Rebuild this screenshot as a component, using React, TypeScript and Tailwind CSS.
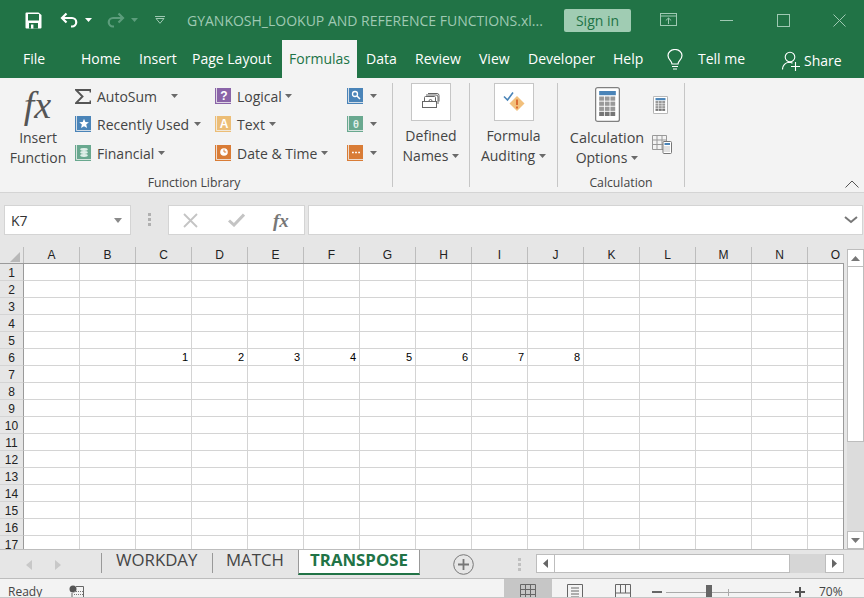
import React from "react";

const COLS = ["A","B","C","D","E","F","G","H","I","J","K","L","M","N","O"];
const ROWS = Array.from({ length: 17 }, (_, i) => i + 1);

function Caret({ className = "" }: { className?: string }) {
  return (
    <svg width="7" height="4" viewBox="0 0 7 4" className={className}>
      <path d="M0 0h7L3.5 4z" fill="#6a6a6a" />
    </svg>
  );
}

function Book({ color, children }: { color: string; children?: React.ReactNode }) {
  return (
    <svg width="16" height="16" viewBox="0 0 16 16" className="shrink-0">
      <rect x="0" y="0" width="1.2" height="16" fill={color} />
      <rect x="0" y="14.8" width="16" height="1.2" fill={color} />
      <rect x="2" y="0" width="14" height="14" fill={color} />
      {children}
    </svg>
  );
}

function RibbonRow({ icon, label, className = "", caretClass = "ml-1" }: { icon: React.ReactNode; label: string; className?: string; caretClass?: string }) {
  return (
    <div className={`flex items-center ${className}`}>
      <div className="flex w-[22px] shrink-0 items-center">{icon}</div>
      <span className="whitespace-nowrap">{label}</span>
      <Caret className={caretClass} />
    </div>
  );
}

function Sep({ className = "" }: { className?: string }) {
  return <div className={`h-[104px] w-px shrink-0 bg-[#c6c6c6] ${className}`} />;
}

function CalcIcon({ w, h }: { w: number; h: number }) {
  const cells = [];
  for (let r = 0; r < 4; r++) for (let c = 0; c < 3; c++) cells.push(<rect key={`${r}${c}`} x={4 + c * 5.4} y={9.5 + r * 5.1} width="4.6" height="4.2" fill={r === 3 ? "#777" : "#999"} />);
  return (
    <svg width={w} height={h} viewBox="0 0 24 35" preserveAspectRatio="none">
      <rect x="0.6" y="0.6" width="22.8" height="33.8" rx="2" fill="#fff" stroke="#808080" strokeWidth="1.2" />
      <rect x="4" y="4" width="16" height="4.2" fill="#4a84b8" />
      {cells}
    </svg>
  );
}

export default function App() {
  return (
    <div className="flex h-[598px] w-[864px] flex-col overflow-hidden bg-[#e6e6e6] font-['Open_Sans','Noto_Sans',sans-serif] text-[14px] text-[#444]">
      {/* Title bar */}
      <div className="flex h-[40px] shrink-0 items-center bg-[#217346] text-[14px]">
        <svg width="17" height="17" viewBox="0 0 17 17" className="ml-[25px]">
          <path d="M0.5 1.5a1 1 0 0 1 1-1H13.5L16.5 3v12.5a1 1 0 0 1-1 1H1.5a1 1 0 0 1-1-1z" fill="#fff" />
          <rect x="3" y="2" width="11" height="6.5" fill="#217346" />
          <rect x="4" y="11" width="9" height="5.5" fill="#217346" />
          <rect x="6" y="12.5" width="2.4" height="4" fill="#fff" />
        </svg>
        <svg width="19" height="16" viewBox="0 0 19 16" className="ml-[18px]" fill="none">
          <path d="M6.5 1.5 2 6l4.5 4.5" stroke="#fff" strokeWidth="2.2" />
          <path d="M2.5 6H12a4.2 4.2 0 0 1 0 8.5h-1" stroke="#fff" strokeWidth="2.2" />
        </svg>
        <svg width="7" height="4" viewBox="0 0 7 4" className="ml-[6px]"><path d="M0 0h7L3.5 4z" fill="#fff" /></svg>
        <svg width="19" height="16" viewBox="0 0 19 16" className="ml-[14px]" fill="none">
          <path d="M12.5 1.5 17 6l-4.5 4.5" stroke="#5c9d7c" strokeWidth="2.2" />
          <path d="M16.5 6H7a4.2 4.2 0 0 0 0 8.5h1" stroke="#5c9d7c" strokeWidth="2.2" />
        </svg>
        <svg width="7" height="4" viewBox="0 0 7 4" className="ml-[6px]"><path d="M0 0h7L3.5 4z" fill="#5c9d7c" /></svg>
        <svg width="10" height="8" viewBox="0 0 10 8" className="ml-[17px]" fill="none">
          <path d="M0 0.5h10" stroke="#9fc9b3" />
          <path d="M1 2.5h8L5 7.3z" stroke="#9fc9b3" />
        </svg>
        <span className="ml-[22px] w-[377px] whitespace-nowrap text-[#9fc9b3]">GYANKOSH_LOOKUP AND REFERENCE FUNCTIONS.xl...</span>
        <div className="flex h-[23px] w-[67px] items-center justify-center rounded-[2px] bg-[#a0ccb3] text-[#217346]">Sign in</div>
        <svg width="17" height="14" viewBox="0 0 17 14" className="ml-[29px]" fill="none" stroke="#9fc9b3">
          <rect x="0.5" y="0.5" width="16" height="12" />
          <path d="M0.5 3h16M8.5 11V5M5.8 7.5 8.5 5l2.7 2.5" />
        </svg>
        <div className="ml-[43px] h-px w-[13px] bg-[#9fc9b3]" />
        <div className="ml-[44px] h-[13px] w-[13px] border border-[#9fc9b3]" />
        <svg width="13" height="13" viewBox="0 0 13 13" className="ml-[43px]" stroke="#9fc9b3"><path d="M0.5 0.5l12 12M12.5 0.5l-12 12" /></svg>
      </div>

      {/* Tabs */}
      <div className="flex h-[38px] shrink-0 items-stretch bg-[#217346] text-[#fff]">
        <span className="ml-[23px] w-[58px] pt-[8px]">File</span>
        <span className="w-[58px] pt-[8px]">Home</span>
        <span className="w-[53px] pt-[8px]">Insert</span>
        <span className="w-[90px] whitespace-nowrap pt-[8px]">Page Layout</span>
        <span className="w-[75px] bg-[#f3f3f3] pt-[8px] text-center text-[#217346]">Formulas</span>
        <span className="ml-[9px] w-[49px] pt-[8px]">Data</span>
        <span className="w-[64px] pt-[8px]">Review</span>
        <span className="w-[49px] pt-[8px]">View</span>
        <span className="w-[85px] pt-[8px]">Developer</span>
        <span className="w-[54px] pt-[8px]">Help</span>
        <svg width="16" height="21" viewBox="0 0 16 21" className="mt-[9px]" fill="none" stroke="#fff" strokeWidth="1.2">
          <path d="M5 15c0-3-4-4.500-4-8.500a7 6 0 0 1 14 0C15 10.500 11 12 11 15z" />
          <path d="M5 17.500h6M6 20h4" />
        </svg>
        <span className="ml-[15px] w-[84px] whitespace-nowrap pt-[8px]">Tell me</span>
        <svg width="19" height="20" viewBox="0 0 19 20" className="mt-[11px]" fill="none" stroke="#fff" strokeWidth="1.1">
          <circle cx="8" cy="6" r="4.800" />
          <path d="M0.500 18.500c0-4 3-7 6.500-7.200 1.500 0 2.500.3 3.500 1" />
          <path d="M9 15.500h9M13.500 11v9" />
        </svg>
        <span className="ml-[3px] pt-[10px]">Share</span>
      </div>

      {/* Ribbon */}
      <div className="relative flex h-[115px] shrink-0 border-b border-[#d4d4d4] bg-[#f3f3f3] pt-[5px] text-[#444]">
        <div className="flex w-[392px] shrink-0 flex-col">
          <div className="flex h-[92px]">
            <div className="flex w-[75px] shrink-0 flex-col items-center pl-[1px] leading-[20px]">
              <span className="h-[44px] pr-[1px] font-['Liberation_Serif',serif] text-[38px] leading-[44px] italic text-[#555]">fx</span>
              <span className="mt-[1px]">Insert</span>
              <span>Function</span>
            </div>
            <div className="w-[140px] shrink-0">
              <RibbonRow
                className="h-[26px]"
                caretClass="ml-[14px]"
                label="AutoSum"
                icon={<svg width="16" height="15" viewBox="0 0 16 15" fill="none"><path d="M15.500 3.500V1H1l6.500 6.500L1 14h14.500v-2.500" stroke="#555" strokeWidth="1.900" /></svg>}
              />
              <RibbonRow className="h-[30px]" caretClass="ml-[5px]" label="Recently Used" icon={<Book color="#4a84b8"><path d="M9 2.800l1.400 3.300 3.500.2-2.700 2.300.9 3.400L9 10.200 6 12l.9-3.400L4.200 6.300l3.500-.2z" fill="#fff" /></Book>} />
              <RibbonRow className="h-[28px]" label="Financial" icon={<Book color="#69a88f"><ellipse cx="9" cy="4.500" rx="3.800" ry="1.400" fill="#dfeee8" /><ellipse cx="9" cy="7.500" rx="3.800" ry="1.400" fill="#dfeee8" /><ellipse cx="9" cy="10.500" rx="3.800" ry="1.400" fill="#dfeee8" /></Book>} />
            </div>
            <div className="w-[132px] shrink-0">
              <RibbonRow className="h-[26px]" caretClass="ml-[3px]" label="Logical" icon={<Book color="#8a64a8"><text x="9" y="12" textAnchor="middle" fontSize="12" fontWeight="700" fill="#fff" fontFamily="Liberation Sans">?</text></Book>} />
              <RibbonRow className="h-[30px]" label="Text" icon={<Book color="#ecbd76"><text x="9" y="12" textAnchor="middle" fontSize="12" fontWeight="700" fill="#fff" fontFamily="Liberation Sans">A</text></Book>} />
              <RibbonRow className="h-[28px]" caretClass="ml-[4px]" label="Date & Time" icon={<Book color="#d97c36"><circle cx="9" cy="7" r="3.800" fill="#fff" /><path d="M9 4.500V7h2.200" stroke="#d97c36" fill="none" /></Book>} />
            </div>
            <div className="shrink-0">
              <div className="flex h-[26px] items-center"><Book color="#4a84b8"><circle cx="8" cy="6" r="2.500" fill="none" stroke="#fff" strokeWidth="1.300" /><path d="M10 8l3 3" stroke="#fff" strokeWidth="1.500" /></Book><Caret className="ml-[7px]" /></div>
              <div className="flex h-[30px] items-center"><Book color="#69a88f"><text x="9" y="12" textAnchor="middle" fontSize="11" fontWeight="700" fill="#dfeee8" fontFamily="Liberation Sans">θ</text></Book><Caret className="ml-[7px]" /></div>
              <div className="flex h-[28px] items-center"><Book color="#d97c36"><path d="M5 7.500h1.800M8.100 7.500h1.800M11.200 7.500H13" stroke="#fff" strokeWidth="1.500" /></Book><Caret className="ml-[7px]" /></div>
            </div>
          </div>
          <div className="pr-[4px] text-center text-[12.25px] leading-[16px]">Function Library</div>
        </div>
        <Sep />
        <div className="flex w-[76px] shrink-0 flex-col items-center leading-[20px]">
          <div className="flex h-[38px] w-[40px] items-center justify-center border border-[#c6c6c6] bg-[#fff]">
            <svg width="20" height="20" viewBox="0 0 20 20" fill="none" stroke="#666">
              <rect x="1.500" y="9.500" width="14" height="6" />
              <path d="M3.500 9.500V5.500a1 1 0 0 1 1-1h9a1 1 0 0 1 1 1V9.500M5 3h10a2 2 0 0 1 2 2v7M7 1.500h9a2 2 0 0 1 2 2v6" />
              <path d="M8 9a1.500 1.500 0 0 1 3 0" />
            </svg>
          </div>
          <span className="mt-[5px]">Defined</span>
          <span className="flex items-center">Names<Caret className="ml-[4px]" /></span>
        </div>
        <Sep />
        <div className="flex w-[87px] shrink-0 flex-col items-center leading-[20px]">
          <div className="flex h-[38px] w-[40px] items-center justify-center border border-[#c6c6c6] bg-[#fff]">
            <svg width="22" height="22" viewBox="0 0 22 22">
              <path d="M14 5l7.500 7.500L14 20l-7.500-7.500z" fill="#f2c07c" />
              <path d="M14 8.500v5.500M14 15.500v2" stroke="#d8642c" strokeWidth="1.800" />
              <path d="M1 5.500l3.500 3.500L10 1.500" stroke="#4a84b8" strokeWidth="1.600" fill="none" />
            </svg>
          </div>
          <span className="mt-[5px]">Formula</span>
          <span className="flex items-center">Auditing<Caret className="ml-[4px]" /></span>
        </div>
        <Sep />
        <div className="w-[126px] shrink-0">
          <div className="flex h-[92px]">
            <div className="flex w-[92px] shrink-0 flex-col items-center pl-[6px] leading-[20px]">
              <div className="mt-[4px] flex h-[35px]"><CalcIcon w={25} h={35} /></div>
              <span className="mt-[6px] whitespace-nowrap text-[14.4px]">Calculation</span>
              <span className="flex items-center">Options<Caret className="ml-[4px]" /></span>
            </div>
            <div className="flex flex-col pl-[2px]">
              <div className="mt-[13px] flex pl-[1px]"><CalcIcon w={15} h={18} /></div>
              <svg width="20" height="19" viewBox="0 0 20 19" className="mt-[21px]" fill="none">
                <path d="M0.500 0.500h14v14h-14zM0.500 5h14M0.500 9.500h14M5 0.500v14M10 0.500v14" stroke="#999" />
                <rect x="11" y="6.500" width="8.500" height="12" rx="1" fill="#fff" stroke="#777" />
                <rect x="12.500" y="8" width="5.500" height="2" fill="#4a84b8" />
                <path d="M12.500 12h5.500M12.500 14h5.500M12.500 16h5.500" stroke="#888" strokeDasharray="1 1" />
              </svg>
            </div>
          </div>
          <div className="text-center text-[12.25px] leading-[16px]">Calculation</div>
        </div>
        <Sep />
        <svg width="14" height="8" viewBox="0 0 14 8" className="absolute right-[5px] bottom-[4px]" fill="none" stroke="#555"><path d="M0.500 7.500 7 1l6.500 6.500" /></svg>
      </div>

      {/* Formula bar */}
      <div className="flex h-[54px] shrink-0 items-start pt-[12px]">
        <div className="ml-[4px] flex h-[30px] w-[127px] shrink-0 items-center justify-between border border-[#d4d4d4] bg-[#fff] pl-[6px] pr-[8px] text-[#333]">
          <span>K7</span>
          <svg width="8" height="5" viewBox="0 0 8 5"><path d="M0 0h8L4 5z" fill="#8a8a8a" /></svg>
        </div>
        <div className="ml-[17px] mt-[8px] flex w-[3px] shrink-0 flex-col gap-[2px]">
          <div className="h-[3px] bg-[#b0b0b0]" />
          <div className="h-[3px] bg-[#b0b0b0]" />
          <div className="h-[3px] bg-[#b0b0b0]" />
        </div>
        <div className="ml-[17px] flex h-[30px] w-[137px] shrink-0 items-center border border-[#d4d4d4] bg-[#fff]">
          <svg width="15" height="15" viewBox="0 0 15 15" className="ml-[14px]" stroke="#c4c4c4" strokeWidth="1.800"><path d="M1 1l13 13M14 1 1 14" /></svg>
          <svg width="17" height="14" viewBox="0 0 17 14" className="ml-[30px]" fill="none" stroke="#c4c4c4" strokeWidth="3"><path d="M1 7.500l5 4.500L16 1.500" /></svg>
          <span className="ml-[28px] font-['Liberation_Serif',serif] text-[19px] font-bold italic leading-none text-[#777]">fx</span>
        </div>
        <div className="ml-[3px] flex h-[30px] w-[555px] shrink-0 items-center justify-end border border-[#d4d4d4] bg-[#fff] pr-[4px]">
          <svg width="14" height="8" viewBox="0 0 14 8" fill="none" stroke="#777" strokeWidth="2"><path d="M1 1l6 5 6-5" /></svg>
        </div>
      </div>

      {/* Sheet area */}
      <div className="flex h-[302px] shrink-0 overflow-hidden">
        <div className="flex w-[844px] shrink-0 flex-col overflow-hidden">
          <div className="flex h-[16px] shrink-0 bg-[#e6e6e6]">
            <div className="flex w-[24px] shrink-0 items-end justify-end border-r border-[#bdbdbd] pb-[1px] pr-[3px]">
              <svg width="10" height="10" viewBox="0 0 10 10"><path d="M10 0v10H0z" fill="#b8b8b8" /></svg>
            </div>
            {COLS.map((c) => (
              <div key={c} className="flex w-[56px] shrink-0 items-center justify-center border-r border-[#bdbdbd] font-['Liberation_Sans',sans-serif] text-[12px] text-[#222]">{c}</div>
            ))}
          </div>
          <div className="h-px shrink-0 bg-[#9a9a9a]" />
          <div className="min-h-0 flex-1 overflow-hidden border-r border-[#9a9a9a] bg-[#fff]">
            {ROWS.map((r) => (
              <div key={r} className="flex h-[17px]">
                <div className="flex w-[24px] shrink-0 items-center justify-center border-r border-b border-r-[#9a9a9a] border-b-[#d4d4d4] bg-[#e6e6e6] pt-[1px] font-['Liberation_Sans',sans-serif] text-[12px] text-[#222]">{r}</div>
                {COLS.map((c, i) => (
                  <div key={c} className="flex w-[56px] shrink-0 items-center justify-end border-r border-b border-[#d4d4d4] pr-[3px] pt-[1px] font-['Liberation_Sans',sans-serif] text-[11px] text-[#000]">
                    {r === 6 && i >= 2 && i <= 9 ? i - 1 : ""}
                  </div>
                ))}
              </div>
            ))}
          </div>
        </div>
        <div className="ml-[3px] mt-[2px] flex w-[17px] shrink-0 flex-col bg-[#dcdcdc]">
          <div className="flex h-[18px] shrink-0 items-center justify-center border border-[#bdbdbd] bg-[#fff]">
            <svg width="9" height="5" viewBox="0 0 9 5"><path d="M4.500 0 9 5H0z" fill="#777" /></svg>
          </div>
          <div className="h-[175px] shrink-0 border-x border-b border-[#bdbdbd] bg-[#fff]" />
          <div className="flex-1" />
          <div className="flex h-[18px] shrink-0 items-center justify-center border border-[#bdbdbd] bg-[#fff]">
            <svg width="9" height="5" viewBox="0 0 9 5"><path d="M0 0h9L4.500 5z" fill="#777" /></svg>
          </div>
        </div>
      </div>

      {/* Sheet tabs */}
      <div className="flex h-[30px] shrink-0 items-start border-t border-b border-[#bdbdbd] text-[16.8px] text-[#444]">
        <svg width="6" height="10" viewBox="0 0 6 10" className="ml-[26px] mt-[10px]"><path d="M6 0v10L0 5z" fill="#c8c8c8" /></svg>
        <svg width="6" height="10" viewBox="0 0 6 10" className="ml-[23px] mt-[10px]"><path d="M0 0v10l6-5z" fill="#c8c8c8" /></svg>
        <div className="ml-[40px] mt-[3px] h-[20px] w-px bg-[#999]" />
        <span className="ml-[14px] w-[96px] whitespace-nowrap leading-[20px]">WORKDAY</span>
        <div className="mt-[3px] h-[20px] w-px bg-[#999]" />
        <span className="ml-[13px] w-[72px] leading-[20px]">MATCH</span>
        <div className="flex h-[25px] w-[122px] items-start justify-center border-x border-b-2 border-x-[#999] border-b-[#217346] bg-[#fff] font-bold leading-[20px] whitespace-nowrap text-[#217346]">TRANSPOSE</div>
        <svg width="21" height="21" viewBox="0 0 21 21" className="ml-[33px] mt-[4px]" fill="none" stroke="#777">
          <circle cx="10.500" cy="10.500" r="9.800" />
          <path d="M10.500 5v11M5 10.500h11" strokeWidth="1.800" />
        </svg>
        <div className="ml-[44px] mt-[8px] flex w-[3px] shrink-0 flex-col gap-[2px]">
          <div className="h-[3px] bg-[#c0c0c0]" />
          <div className="h-[3px] bg-[#c0c0c0]" />
          <div className="h-[3px] bg-[#c0c0c0]" />
        </div>
        <div className="ml-[15px] mt-[4px] flex h-[19px] w-[308px] shrink-0 bg-[#d6d6d6]">
          <div className="flex w-[19px] items-center justify-center border border-[#bdbdbd] bg-[#fff]"><svg width="5" height="9" viewBox="0 0 5 9"><path d="M5 0v9L0 4.500z" fill="#666" /></svg></div>
          <div className="w-[235px] border-y border-r border-[#bdbdbd] bg-[#fff]" />
          <div className="flex-1" />
          <div className="flex w-[19px] items-center justify-center border border-[#bdbdbd] bg-[#fff]"><svg width="5" height="9" viewBox="0 0 5 9"><path d="M0 0v9l5-4.500z" fill="#666" /></svg></div>
        </div>
      </div>

      {/* Status bar */}
      <div className="flex h-[19px] shrink-0 items-start overflow-hidden border-b border-[#c6c6c6] bg-[#f3f3f3] text-[12px] text-[#444]">
        <span className="ml-[8px] mt-[5px] w-[61px] leading-[16px]">Ready</span>
        <svg width="15" height="14" viewBox="0 0 15 14" className="mt-[6px]" fill="none">
          <circle cx="4" cy="4" r="3.500" fill="#555" />
          <path d="M7 1.500h7.500V14M3 8v6" stroke="#666" />
          <path d="M5 6.500h9M5 9.500h9M5 12.500h9" stroke="#777" strokeDasharray="1 1" />
        </svg>
        <div className="ml-[420px] flex h-[20px] w-[48px] items-start justify-center bg-[#c6c6c6]">
          <svg width="16" height="16" viewBox="0 0 16 16" fill="none" stroke="#666" className="mt-[5px]"><path d="M0.500 0.500h15v15h-15zM0.500 5.500h15M0.500 10.500h15M5.500 0.500v15M10.500 0.500v15" /></svg>
        </div>
        <svg width="16" height="16" viewBox="0 0 16 16" fill="none" stroke="#666" className="ml-[15px] mt-[5px]"><path d="M0.500 0.500h15v15h-15zM4 4h8M4 7h8M4 10h8M4 13h8" /></svg>
        <svg width="16" height="16" viewBox="0 0 16 16" fill="none" stroke="#666" className="ml-[32px] mt-[5px]"><path d="M0.500 0.500h15v15h-15zM0.500 9h15M5.500 0.500V9M10.500 0.500V9" /></svg>
        <div className="ml-[21px] mt-[12px] h-[2px] w-[10px] bg-[#666]" />
        <div className="relative ml-[4px] mt-[13px] h-px w-[125px] bg-[#aaa]">
          <div className="absolute left-[40px] top-[-7px] h-[14px] w-[6px] bg-[#666]" />
          <div className="absolute left-[62px] top-[-3px] h-[7px] w-px bg-[#aaa]" />
        </div>
        <svg width="10" height="10" viewBox="0 0 10 10" className="ml-[4px] mt-[8px]" stroke="#555" strokeWidth="2"><path d="M0 5h10M5 0v10" /></svg>
        <span className="ml-[14px] mt-[4px] leading-[18px]">70%</span>
      </div>
    </div>
  );
}
